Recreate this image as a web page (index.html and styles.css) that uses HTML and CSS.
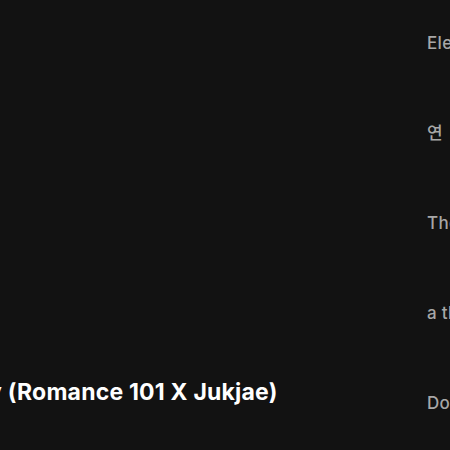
FILE: index.html
```html
<html>
  <head>
    <title>Track</title>
    <link rel="stylesheet" href="styles.css">
  </head>
  <body>
    <div class="page">
      <div class="main">
        <h2 class="track-title">Love Story (Romance 101 X Jukjae)</h2>
      </div>
      <ul class="side">
        <li>Electronic</li>
        <li>연&nbsp;&nbsp;&nbsp;애의 온도</li>
        <li>The Night</li>
        <li>a thousand years</li>
        <li>Do you remember</li>
      </ul>
    </div>
  </body>
</html>
```

FILE: styles.css
```css
html, body {
  margin: 0;
  padding: 0;
  background-color: #121212;
  font-family: 'Inter', 'Noto Sans CJK KR', sans-serif;
}

.page {
  display: flex;
  flex-direction: row;
  width: 450px;
  height: 450px;
  overflow: hidden;
}

.main {
  width: 427px;
  flex-shrink: 0;
  display: flex;
  flex-direction: column;
  justify-content: flex-end;
  overflow: hidden;
}

.track-title {
  margin: 0 0 44px -120px;
  color: #fff;
  font-size: 23px;
  font-weight: 700;
  line-height: 28px;
  letter-spacing: 0.2px;
  white-space: nowrap;
}

.side {
  list-style: none;
  margin: 0;
  padding: 33px 0 0 0;
  color: #a7a7a7;
  font-size: 17px;
  font-weight: 500;
  letter-spacing: 0.3px;
  white-space: nowrap;
}

.side li {
  height: 90px;
  line-height: 20px;
}
```
